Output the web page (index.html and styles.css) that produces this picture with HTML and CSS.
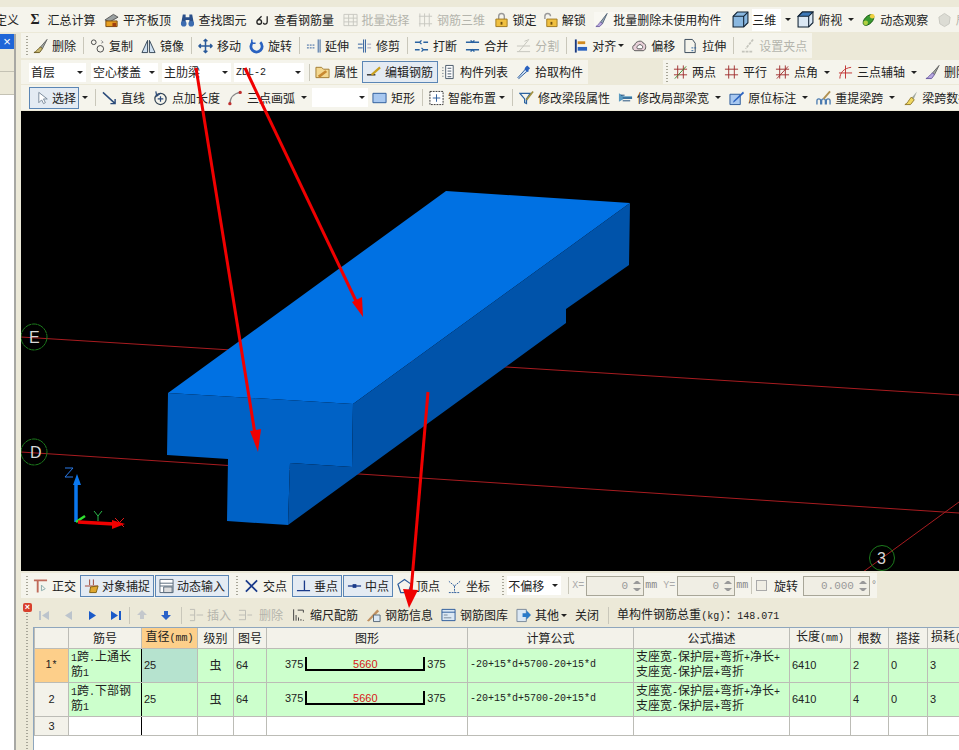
FILE: index.html
```html
<!DOCTYPE html>
<html lang="zh">
<head>
<meta charset="utf-8">
<title>钢筋编辑</title>
<link rel="stylesheet" href="styles.css">
</head>
<body>
<div class="app">
  <div class="tb r1">
    <span class="it first"><span>定义</span></span>
    <span class="it"><span class="sigma">Σ</span><span>汇总计算</span></span>
    <span class="it"><svg class="ic" viewBox="0 0 16 16"><path d="M1 8l9-6 5 3-9 5z" fill="#9aa0a0" stroke="#555"/><path d="M2 9h12v6H2z" fill="#e8a020" stroke="#7a4a10"/><path d="M9 11h4v4H9z" fill="#a04010"/></svg><span>平齐板顶</span></span>
    <span class="it"><svg class="ic" viewBox="0 0 16 16"><path d="M3 2h3v3h4V2h3l2 11h-5V8H6v5H1z" fill="#2a4f8a"/><circle cx="4" cy="12" r="3" fill="#3d6cb0"/><circle cx="12" cy="12" r="3" fill="#3d6cb0"/></svg><span>查找图元</span></span>
    <span class="it"><svg class="ic" viewBox="0 0 16 16" fill="none" stroke="#222" stroke-width="1.4"><circle cx="4.500" cy="10" r="2.500"/><path d="M3 8l4-4"/><path d="M13 4v6c0 3-4 3-4 1"/></svg><span>查看钢筋量</span></span>
    <span class="it off"><svg class="ic" viewBox="0 0 16 16" fill="none" stroke="#c8c8c0"><path d="M1 2h14v12H1zM1 6h14M1 10h14M6 2v12M11 2v12"/></svg><span>批量选择</span></span>
    <span class="it off"><svg class="ic" viewBox="0 0 16 16" fill="none" stroke="#c8c8c0"><path d="M2 1v14M7 1v14M12 1v14M1 4h14M1 12h14"/></svg><span>钢筋三维</span></span>
    <span class="it"><svg class="ic" viewBox="0 0 16 16"><path d="M5 8V4a3 3 0 016 0v4" fill="none" stroke="#999" stroke-width="1.500"/><path d="M2 7h12v8H2z" fill="#f0c040" stroke="#a07a20"/><path d="M7 10h2v3H7z" fill="#705010"/></svg><span>锁定</span></span>
    <span class="it m6"><svg class="ic" viewBox="0 0 16 16"><path d="M2 7V4a3 3 0 016 0" fill="none" stroke="#999" stroke-width="1.500"/><path d="M4 7h11v8H4z" fill="#f0c040" stroke="#a07a20"/><path d="M8 10h2v3H8z" fill="#705010"/></svg><span>解锁</span></span>
    <span class="it wide"><svg class="ic" viewBox="0 0 16 16"><path d="M14 1L7 10l2 2z" fill="#9ab" stroke="#567"/><path d="M7 10l2 2-3 3H2c2-1 3-3 5-5z" fill="#b8a8e0" stroke="#7060a0"/></svg><span>批量删除未使用构件</span></span>
    <span class="it m11"><svg class="ic big" viewBox="0 0 16 16"><path d="M1 5l4-4h10v10l-4 4H1z" fill="#8ab8e0" stroke="#123"/><path d="M1 5h10v10M11 5l4-4" fill="none" stroke="#123"/></svg><span class="whitebg">三维</span><span class="dd"></span></span>
    <span class="it m6"><svg class="ic big" viewBox="0 0 16 16"><path d="M1 5l4-4h10v10l-4 4H1z" fill="#dbe8f4" stroke="#123"/><path d="M1 5l4-4h10l-4 4z" fill="#3c78b8" stroke="#123"/><path d="M11 5v10" stroke="#123"/></svg><span>俯视</span><span class="dd"></span></span>
    <span class="it m7"><svg class="ic" viewBox="0 0 16 16"><ellipse cx="8" cy="8" rx="7" ry="4" transform="rotate(-45 8 8)" fill="#3a9a30" stroke="#1a5a10"/><circle cx="5" cy="11" r="2.500" fill="#b0d040"/><circle cx="12" cy="4" r="2.500" fill="#f0d040"/></svg><span>动态观察</span></span>
    <span class="it off"><svg class="ic" viewBox="0 0 16 16"><path d="M8 1l6 4-1 7-5 3-5-3-1-7z" fill="#dcdcd4" stroke="#c8c8c0"/></svg><span>局部三维</span></span>
  </div>

  <div class="body">
    <aside class="side">
      <div class="side-inner">
        <div class="side-title">×</div>
        <div class="side-tab"></div>
        <div class="side-tab"></div>
        <div class="side-fill"></div>
      </div>
    </aside>

    <main class="main">
      <div class="tb r2"><div class="seg s2">
        <span class="grip"></span>
        <span class="it m5"><svg class="ic" viewBox="0 0 16 16"><path d="M15 1L8 9l2 2z" fill="#a0a8a0" stroke="#666"/><path d="M8 9l2 2-3 4H1c3-1 4-4 7-6z" fill="#c8b870" stroke="#6a5a20"/></svg><span>删除</span></span>
        <span class="sep"></span>
        <span class="it t"><svg class="ic" viewBox="0 0 16 16" fill="none" stroke="#444"><circle cx="4" cy="4" r="2.500"/><circle cx="11" cy="11" r="3.500"/><path d="M12 2l2 2M12 5l2-1" stroke="#888"/></svg><span>复制</span></span>
        <span class="it"><svg class="ic" viewBox="0 0 16 16" fill="#cfe0f0" stroke="#345"><path d="M7 2v13H1zM9 2v13h6z"/></svg><span>镜像</span></span>
        <span class="sep"></span>
        <span class="it t"><svg class="ic" viewBox="0 0 16 16" fill="none" stroke="#2a5a9a" stroke-width="1.600"><path d="M8 1v14M1 8h14M6 3l2-2 2 2M6 13l2 2 2-2M3 6L1 8l2 2M13 6l2 2-2 2"/></svg><span>移动</span></span>
        <span class="it"><svg class="ic" viewBox="0 0 16 16" fill="none" stroke="#2a62c0" stroke-width="3"><path d="M4 4a6 6 0 108 0"/><path d="M3 1v4h4" stroke-width="1.600"/></svg><span>旋转</span></span>
        <span class="sep"></span>
        <span class="it t"><svg class="ic" viewBox="0 0 16 16" fill="none" stroke="#2a5a9a"><path d="M13 1v14M15 1v14" /><path d="M1 7h2M4 7h2M7 7h3M1 10h9" stroke-dasharray="2 1"/></svg><span>延伸</span></span>
        <span class="it"><svg class="ic" viewBox="0 0 16 16" fill="none" stroke="#2a5a9a"><path d="M7 1v14M9 1v14M1 6h5M1 10h5"/><path d="M11 6h4M11 10h4" stroke="#99b"/></svg><span>修剪</span></span>
        <span class="sep"></span>
        <span class="it t"><svg class="ic" viewBox="0 0 16 16" fill="none" stroke="#2a62a0" stroke-width="1.400"><path d="M1 4h5M10 4h5M1 12h5M10 12h5M8 6l-2-2 2-2M8 10l2 2-2 2"/></svg><span>打断</span></span>
        <span class="it"><svg class="ic" viewBox="0 0 16 16" fill="none" stroke="#2a62a0" stroke-width="1.400"><path d="M1 4h14M1 12h14M6 2l2 2 2-2M6 14l2-2 2 2"/></svg><span>合并</span></span>
        <span class="it off"><svg class="ic" viewBox="0 0 16 16" fill="none" stroke="#c4c4bc"><path d="M1 8h14M1 14h14M3 14l10-12M9 3l5-2"/></svg><span>分割</span></span>
        <span class="sep"></span>
        <span class="it t"><svg class="ic" viewBox="0 0 16 16"><path d="M2 1h2v14H2z" fill="#1a3a80"/><path d="M5 3h8v3H5z" fill="#d08a20"/><path d="M5 9h10v4H5z" fill="#2a62c0"/></svg><span>对齐</span><span class="dd n"></span></span>
        <span class="it"><svg class="ic" viewBox="0 0 16 16" fill="#e8d0d8" stroke="#555"><path d="M3 13c-3-1-3-6 0-6 0-4 8-6 9-2 3 0 4 7 0 8z"/><path d="M6 11c-1-1-1-2 0-3 1-2 4-2 5 0 1 1 0 3-1 3z" fill="#fff"/></svg><span>偏移</span></span>
        <span class="it"><svg class="ic" viewBox="0 0 16 16" fill="none" stroke="#345"><path d="M2 15V1h8l3 4v10z"/><path d="M9 10h5M9 13h3" stroke="#2a62a0" stroke-dasharray="2 1"/></svg><span>拉伸</span></span>
        <span class="sep"></span>
        <span class="it t off"><svg class="ic" viewBox="0 0 16 16" fill="none" stroke="#c4c4bc"><path d="M14 1L6 11M2 14h12" stroke-width="1.800" stroke-dasharray="3 1"/></svg><span>设置夹点</span></span>
      </div></div>

      <div class="tb r3">
        <div class="seg s3a">
          <span class="combo c1"><span>首层</span><i class="dd"></i></span>
          <span class="combo c2"><span>空心楼盖</span><i class="dd"></i></span>
          <span class="combo c3"><span>主肋梁</span><i class="dd"></i></span>
          <span class="combo c4"><span class="lat">ZDL-2</span><i class="dd"></i></span>
          <span class="sep s5m"></span>
          <span class="it m5"><svg class="ic" viewBox="0 0 16 16"><path d="M1 3h6l2 2h6v9H1z" fill="#f4d890" stroke="#a07a30"/><path d="M3 12l8-6 2 2-8 6z" fill="#c88830"/></svg><span>属性</span></span>
          <span class="it btn e"><svg class="ic" viewBox="0 0 16 16" fill="none"><path d="M1 11h9" stroke="#222" stroke-width="1.400"/><path d="M15 3L6 11" stroke="#c8a020" stroke-width="2.400"/></svg><span>编辑钢筋</span></span>
          <span class="it m3"><svg class="ic" viewBox="0 0 16 16" fill="none" stroke="#456"><path d="M5 1h8v14H5z" fill="#fff"/><path d="M7 4h4M7 7h4M7 10h4M7 13h4M2 3v1M2 6v1M2 9v1M2 12v1"/></svg><span>构件列表</span></span>
          <span class="it"><svg class="ic" viewBox="0 0 16 16"><path d="M2 14l8-9 2 2-9 8z" fill="#cfe0f4" stroke="#2a5a9a"/><path d="M10 3l2-2 3 3-2 2 1 1-2 1-3-3 1-2z" fill="#2a62c0"/></svg><span>拾取构件</span></span>
        </div>
        <div class="seg s3b">
          <span class="grip g1"></span>
          <span class="it m5"><svg class="ic" viewBox="0 0 16 16" fill="none" stroke="#a03030"><path d="M1 5h14M1 11h14M5 1v14M11 1v14"/><path d="M2 15L14 2" stroke="#3a8a30"/></svg><span>两点</span></span>
          <span class="it"><svg class="ic" viewBox="0 0 16 16" fill="none" stroke="#a03030"><path d="M1 5h14M1 11h14M5 1v14M11 1v14"/></svg><span>平行</span></span>
          <span class="it"><svg class="ic" viewBox="0 0 16 16" fill="none" stroke="#a03030"><path d="M1 5h14M1 11h14M5 1v14M11 1v14M2 15L14 2"/></svg><span>点角</span><span class="dd"></span></span>
          <span class="it"><svg class="ic" viewBox="0 0 16 16" fill="none" stroke="#c03030"><path d="M2 15C2 9 6 4 14 3M1 9h14M8 1v14"/></svg><span>三点辅轴</span><span class="dd"></span></span>
          <span class="it"><svg class="ic" viewBox="0 0 16 16"><path d="M15 1L8 9l2 2z" fill="#a0a8a0" stroke="#666"/><path d="M8 9l2 2-3 4H1c3-1 4-4 7-6z" fill="#b8a8e0" stroke="#6a5aa0"/></svg><span>删除</span></span>
        </div>
      </div>

      <div class="tb r4"><div class="seg s4">
        <span class="it btn sel"><svg class="ic" viewBox="0 0 16 16"><path d="M3 2v11l3-3 2 4 2-1-2-4h4z" fill="#fff" stroke="#789"/></svg><span>选择</span></span>
        <span class="dd n3"></span>
        <span class="sep"></span>
        <span class="it t"><svg class="ic" viewBox="0 0 16 16" fill="none" stroke="#2a4a7a" stroke-width="1.500"><path d="M1 2l13 12M14 9v5H9"/></svg><span>直线</span></span>
        <span class="it"><svg class="ic" viewBox="0 0 16 16" fill="none" stroke="#345" stroke-width="1.300"><circle cx="8" cy="9" r="6"/><path d="M8 6v6M5 9h6M3 1l1 5 4-3" stroke="#2a4a7a"/></svg><span>点加长度</span></span>
        <span class="it"><svg class="ic" viewBox="0 0 16 16" fill="none" stroke="#888" stroke-width="1.600"><path d="M2 15C2 8 6 3 13 2"/><circle cx="2" cy="14" r="1" fill="#c03030" stroke="#c03030"/><circle cx="13" cy="2" r="1" fill="#c03030" stroke="#c03030"/></svg><span>三点画弧</span><span class="dd"></span></span>
        <span class="combo c5"><span></span><i class="dd"></i></span>
        <span class="it m4"><svg class="ic" viewBox="0 0 16 16"><path d="M1 3h14v10H1z" fill="#a8c8f0" stroke="#2a5a9a"/></svg><span>矩形</span></span>
        <span class="sep"></span>
        <span class="it t"><svg class="ic" viewBox="0 0 16 16" fill="#fff" stroke="#333" stroke-dasharray="2 1"><path d="M1 1h14v14H1z"/><path d="M8 4v8M4 8h8" stroke="#2a5a9a" stroke-dasharray="none"/></svg><span>智能布置</span><span class="dd n3"></span></span>
        <span class="sep"></span>
        <span class="it t"><svg class="ic" viewBox="0 0 16 16" fill="none" stroke="#2a62a0" stroke-width="1.300"><path d="M1 3h11L8 9v5l-2-1V9z"/><path d="M15 1L8 10" stroke="#a09040" stroke-width="1.800"/></svg><span>修改梁段属性</span></span>
        <span class="it"><svg class="ic" viewBox="0 0 16 16"><path d="M1 3l5 3 9 0v3l-9 0-5 3z" fill="#5a9ac0"/><path d="M5 8h10M5 11h8M3 5h4" stroke="#1a4a7a" fill="none"/></svg><span>修改局部梁宽</span><span class="dd"></span></span>
        <span class="it"><svg class="ic" viewBox="0 0 16 16"><path d="M1 4h11v11H1z" fill="#a8c8f0" stroke="#2a5a9a"/><path d="M15 1L5 11l-1 2 2-1L16 3z" fill="#2a62c0"/></svg><span>原位标注</span><span class="dd"></span></span>
        <span class="it"><svg class="ic" viewBox="0 0 16 16" fill="none" stroke="#4a7ab0" stroke-width="1.400"><path d="M1 15v-4a2 2 0 014 0v4M6 15v-4a2 2 0 014 0v4M11 15v-4a2 2 0 014 0v4"/><path d="M15 1L8 9" stroke="#b09050" stroke-width="2"/></svg><span>重提梁跨</span><span class="dd"></span></span>
        <span class="it"><svg class="ic" viewBox="0 0 16 16"><path d="M15 1L9 8l2 2z" fill="#a0a8a0"/><path d="M9 7l3 3-4 5H2c3-1 4-5 7-8z" fill="#f0d860" stroke="#90782a"/></svg><span>梁跨数据复制</span></span>
      </div></div>

      <div class="canvas">
        <svg class="scene" viewBox="21 111 938 460" aria-label="三维视图">
          <g fill="none" stroke="#a81c20" stroke-width="1">
            <path d="M21 337L959 395"/>
            <path d="M21 452L959 513"/>
            <path d="M863 572L959 502"/>
          </g>
          <g fill="none" stroke="#1c7a1c">
            <circle cx="34" cy="337" r="13" stroke-dasharray="6 .5"/>
            <circle cx="34" cy="452" r="13" stroke-dasharray="6 .5"/>
            <circle cx="882" cy="558" r="12.500"/>
          </g>
          <g class="axis-name">
            <text x="29" y="343">E</text>
            <text x="30" y="458">D</text>
            <text x="877" y="564">3</text>
          </g>
          <path fill="#0071e3" d="M446 191L630 203L353 404L168 393z"/>
          <path fill="#0062c6" d="M168 393L353 404L352 467L290 463L288 525L227 521L228 459L167 455z"/>
          <path fill="#0053aa" d="M353 404L630 203L629 265L566 309L566 323L288 525L290 463L352 467z"/>
          <g fill="none" stroke-width="1">
            <path d="M65 468h8l-8 9h8" stroke="#2a7ae8"/>
            <path d="M94 511l4 5 4-5M98 516v5" stroke="#2ab84a"/>
            <path d="M115 518l9 9M124 518l-9 9" stroke="#e01818"/>
          </g>
          <path d="M76 522V482" stroke="#0a78f0" stroke-width="3.500"/>
          <path d="M77 474l4 11h-8z" fill="#0a78f0"/>
          <path d="M76 522l9-6" stroke="#30e030" stroke-width="2.500"/>
          <path d="M78 522l36 2" stroke="#f00000" stroke-width="3.500"/>
          <path d="M125 524l-13 5v-9z" fill="#f00000"/>
        </svg>
      </div>

      <div class="tb r5"><div class="seg s5">
        <span class="grip"></span>
        <span class="it m5"><svg class="ic" viewBox="0 0 16 16" fill="none" stroke="#c06a5a" stroke-width="2"><path d="M1 2h14M5 2v13"/><path d="M9 7v6l4-2z" stroke="#8aa" stroke-width="1"/></svg><span>正交</span></span>
        <span class="it btn on one"><svg class="ic" viewBox="0 0 16 16"><path d="M1 8h14M6 1v6M10 1v6" stroke="#a04030" fill="none"/><path d="M7 9l8-1-2 7H6z" fill="#e0a830" stroke="#806010"/></svg><span>对象捕捉</span></span>
        <span class="it btn on two"><svg class="ic" viewBox="0 0 16 16" fill="#fff" stroke="#567"><path d="M1 1h14v14H1z"/><path d="M1 5h14M1 8h14" /><path d="M5 9h9v6H5z" fill="#ddd"/></svg><span>动态输入</span></span>
        <span class="grip g2"></span>
        <span class="it t"><svg class="ic" viewBox="0 0 16 16" fill="none" stroke="#1a3a8a" stroke-width="1.800"><path d="M2 2l12 12M14 2L2 14"/></svg><span>交点</span></span>
        <span class="it btn on three"><svg class="ic" viewBox="0 0 16 16" fill="none" stroke="#1a3a8a" stroke-width="1.400"><path d="M1 13h14M9 2v11"/></svg><span>垂点</span></span>
        <span class="it btn on four"><svg class="ic" viewBox="0 0 16 16"><path d="M1 8h14" stroke="#1a3a8a" stroke-width="1.400"/><path d="M6 6h4v4H6z" fill="#1a3a8a"/></svg><span>中点</span></span>
        <span class="it m4"><svg class="ic" viewBox="0 0 16 16" fill="none" stroke="#2a5a9a" stroke-width="1.300"><path d="M8 1l7 5-3 9H4L1 6z"/></svg><span>顶点</span></span>
        <span class="it m7"><svg class="ic" viewBox="0 0 16 16" fill="none" stroke="#2a5a9a"><path d="M8 8v7M8 8L2 3M8 8l6-5M2 15h12" stroke-dasharray="2 1"/></svg><span>坐标</span></span>
        <span class="grip g3"></span>
        <span class="combo c6"><span>不偏移</span><i class="dd"></i></span>
        <span class="sep"></span>
        <span class="lbl">X=</span>
        <span class="spin sx"><span class="num">0</span><i class="sp"></i></span>
        <span class="lbl mm">mm</span>
        <span class="lbl y">Y=</span>
        <span class="spin sy"><span class="num">0</span><i class="sp"></i></span>
        <span class="lbl mm">mm</span>
        <span class="sep s8"></span>
        <span class="check"></span>
        <span class="rot">旋转</span>
        <span class="spin sr"><span class="num">0.000</span><i class="sp"></i></span>
        <span class="lbl mm">°</span>
      </div></div>

      <section class="panel">
        <span class="close">×</span>
        <div class="tb r6">
          <svg class="nav n1" viewBox="0 0 12 12" fill="#bcc4cc"><path d="M1 2h2v9H1zM11 2v9L4 6.500z"/></svg>
          <svg class="nav n2" viewBox="0 0 12 12" fill="#bcc4cc"><path d="M9 2v9L2 6.500z"/></svg>
          <svg class="nav n3" viewBox="0 0 12 12" fill="#1a5ac8"><path d="M3 2v9l7-4.500z"/></svg>
          <svg class="nav n4" viewBox="0 0 12 12" fill="#1a5ac8"><path d="M1 2v9l7-4.500zM9 2h2v9H9z"/></svg>
          <span class="sep s6"></span>
          <svg class="nav n5" viewBox="0 0 12 12" fill="#c4c8cc"><path d="M6 1l5 5H8v4H4V6H1z"/></svg>
          <svg class="nav n6" viewBox="0 0 12 12" fill="#2a62c8"><path d="M6 11l5-5H8V2H4v4H1z"/></svg>
          <span class="sep s7"></span>
          <span class="it off p"><svg class="ic" viewBox="0 0 16 16" fill="none" stroke="#bcbcb4"><path d="M1 2h5v12H1M1 8h5M8 8h7"/></svg><span>插入</span></span>
          <span class="it off p2"><svg class="ic" viewBox="0 0 16 16" fill="none" stroke="#bcbcb4"><path d="M1 3h7v10H1M1 8h7M10 8h5"/></svg><span>删除</span></span>
          <span class="it p3"><svg class="ic small" viewBox="0 0 16 16" fill="none" stroke="#444" stroke-width="1.200"><path d="M2 1v14M5 15v-7M8 15v-4M11 15v-2M14 15v-1M7 2h7v3" /></svg><span>缩尺配筋</span></span>
          <span class="it"><svg class="ic" viewBox="0 0 16 16"><path d="M1 14L12 2l2 2L3 15z" fill="#c09060"/><path d="M8 8h7v7H8z" fill="#dbe8f4" stroke="#567"/></svg><span>钢筋信息</span></span>
          <span class="it"><svg class="ic" viewBox="0 0 16 16" fill="#dbe8f4" stroke="#2a5a9a"><path d="M1 2h14v12H1z"/><path d="M1 5h14" /><path d="M3 8h4M3 11h8" stroke="#789"/></svg><span>钢筋图库</span></span>
          <span class="it"><svg class="ic" viewBox="0 0 16 16"><path d="M1 2h10v13H1z" fill="#dbe8f4" stroke="#789"/><path d="M7 6h4V3l5 5-5 5v-3H7z" fill="#2a7ac8"/></svg><span>其他</span><span class="dd n"></span></span>
          <span class="it"><span>关闭</span></span>
          <span class="sep s9"></span>
          <span class="total">单构件钢筋总重<span class="n10">(kg)</span>：<span class="n10">148.071</span></span>
        </div>
        <div class="grid-wrap">
          <table class="grid">
            <colgroup>
              <col class="w0"><col class="w1"><col class="w2"><col class="w3"><col class="w4"><col class="w5"><col class="w6"><col class="w7"><col class="w8"><col class="w9"><col class="w10"><col class="w11">
            </colgroup>
            <thead>
              <tr>
                <th></th><th>筋号</th><th class="hot">直径<span class="n10">(mm)</span></th><th>级别</th><th>图号</th><th>图形</th><th>计算公式</th><th>公式描述</th><th>长度<span class="n10">(mm)</span></th><th>根数</th><th>搭接</th><th class="lh">损耗<span class="n10">(%)</span></th>
              </tr>
            </thead>
            <tbody>
              <tr>
                <td class="no hot">1<span class="n10">*</span></td>
                <td class="tx fz"><span class="n10">1</span>跨<span class="n10">.</span>上通长<br>筋<span class="n10">1</span></td>
                <td class="v cur">25</td><td class="ctr">虫</td><td class="v">64</td>
                <td class="shape-cell"><div class="shape"><span class="v">375</span><span class="bar">5660</span><span class="v">375</span></div></td>
                <td class="f">-20+15*d+5700-20+15*d</td>
                <td class="tx d">支座宽<span class="n10">-</span>保护层<span class="n10">+</span>弯折<span class="n10">+</span>净长<span class="n10">+</span><br>支座宽<span class="n10">-</span>保护层<span class="n10">+</span>弯折</td>
                <td class="v">6410</td><td class="v">2</td><td class="v">0</td><td class="v">3</td>
              </tr>
              <tr>
                <td class="no">2</td>
                <td class="tx fz"><span class="n10">1</span>跨<span class="n10">.</span>下部钢<br>筋<span class="n10">1</span></td>
                <td class="v">25</td><td class="ctr">虫</td><td class="v">64</td>
                <td class="shape-cell"><div class="shape"><span class="v">375</span><span class="bar">5660</span><span class="v">375</span></div></td>
                <td class="f">-20+15*d+5700-20+15*d</td>
                <td class="tx d">支座宽<span class="n10">-</span>保护层<span class="n10">+</span>弯折<span class="n10">+</span>净长<span class="n10">+</span><br>支座宽<span class="n10">-</span>保护层<span class="n10">+</span>弯折</td>
                <td class="v">6410</td><td class="v">4</td><td class="v">0</td><td class="v">3</td>
              </tr>
              <tr class="empty">
                <td class="no">3</td><td class="fz"></td><td></td><td></td><td></td><td></td><td></td><td></td><td></td><td></td><td></td><td></td>
              </tr>
            </tbody>
          </table>
        </div>
      </section>
    </main>
  </div>

  <svg class="marks" viewBox="0 0 959 750" aria-hidden="true">
    <g stroke="#f00000" stroke-width="3" fill="none">
      <path d="M196 68L255 434"/>
      <path d="M245 68L356 301"/>
      <path d="M428 392L411 592"/>
    </g>
    <g fill="#f00000">
      <path d="M258 452L250 431L261 429z"/>
      <path d="M363 317L352 302L362 297z"/>
      <path d="M409 608L403 589L418 590z"/>
    </g>
  </svg>
</div>
</body>
</html>
```

FILE: styles.css
```css
* { box-sizing: border-box; }
html, body { margin: 0; padding: 0; }
body { font-family: "Noto Sans CJK SC", "Liberation Sans", sans-serif; font-size: 12px; color: #222; }

.app {
  position: relative;
  width: 959px;
  height: 750px;
  overflow: hidden;
  background: #ece9d8;
  padding-top: 7px;
  display: flex;
  flex-direction: column;
}

.tb { display: flex; align-items: center; height: 25px; flex-shrink: 0; line-height: 1; white-space: nowrap; }
.seg { display: flex; align-items: center; height: 100%; background: #f5f4ec; }
.it { display: inline-flex; align-items: center; gap: 4px; margin-left: 8px; flex-shrink: 0; }
.it.t { margin-left: 6px; }
.it.m3 { margin-left: 3px; }
.it.m4 { margin-left: 4px; }
.it.m5 { margin-left: 5px; }
.it.m6 { margin-left: 6px; }
.it.m7 { margin-left: 7px; }
.it.m11 { margin-left: 11px; }
.it.off { color: #b4b4ac; }
.ic { width: 15px; height: 16px; flex-shrink: 0; }
.ic.big { width: 17px; height: 17px; }
.sep { width: 1px; height: 17px; background: #c9c7ba; margin-left: 7px; flex-shrink: 0; }
.sep.s5m { margin-left: 5px; }
.sep.s8 { margin-left: 3px; }
.sep.s9 { margin-left: 9px; }
.grip { width: 2px; height: 19px; margin-left: 5px; background-image: linear-gradient(#a8a698 50%, transparent 50%); background-size: 2px 3px; flex-shrink: 0; }
.grip.g1 { margin-left: 3px; }
.dd { width: 0; height: 0; border: 3px solid transparent; border-top: 3px solid #222; border-bottom: 0; margin-left: 2px; flex-shrink: 0; display: inline-block; }
.it .dd { margin-left: 2px; }
.it .dd.n { margin-left: -2px; }
.it .dd.n3 { margin-left: -1px; }
.dd.n3 { margin-left: 3px; }

.r1 { background: #f5f4ec; }
.r1 .it { margin-left: 8.5px; }
.r1 .it.first { margin-left: -5px; }
.r1 .it.m6 { margin-left: 6px; }
.r1 .it.m7 { margin-left: 7px; }
.r1 .it.m11 { margin-left: 11px; }
.sigma { font: bold 14px "Liberation Serif", serif; width: 9px; text-align: center; margin-left: 3px; margin-right: 4px; }
.it.wide { background: #f9f8f2; }
.whitebg { background: #fff; padding: 5px 5px 5px 0; margin-left: -1px; margin-right: -2px; }

.body { flex: 1; display: flex; min-height: 0; }
.side { width: 21px; flex-shrink: 0; padding-top: 2px; }
.side-inner { width: 16px; height: 100%; border-right: 2px solid #a8a8a4; background: #fff; display: flex; flex-direction: column; }
.side-title { height: 15px; background: #1f66d8; color: #fff; text-align: center; font: 13px/15px "Liberation Sans", sans-serif; }
.side-tab { height: 23px; background: #ece9d8; border-bottom: 1px solid #c4c2b4; }
.side-fill { flex: 1; }

.main { flex: 1; min-width: 0; display: flex; flex-direction: column; padding-top: 1px; }
.s2 { width: 791px; }
.r3 { margin-top: 2px; justify-content: space-between; height: 24px; }
.s3a { width: 567px; }
.s3b { width: 296px; }
.r4 { margin-top: 1px; }
.s4 { width: 100%; }

.combo { display: flex; align-items: center; justify-content: space-between; height: 19px; background: #fff; padding-left: 2px; margin-left: 4px; flex-shrink: 0; }
.combo > i.dd { margin-left: 0; margin-right: 3px; }
.c1 { width: 57px; margin-left: 8px; }
.c2 { width: 67px; margin-left: 5px; }
.c3 { width: 69px; }
.c4 { width: 70px; margin-left: 3px; }
.c5 { width: 56px; margin-left: 5px; }
.c6 { width: 54px; margin-left: 3px; padding-left: 1px; }
.lat { font: 10px "Liberation Mono", monospace; }

.btn { height: 22px; border: 1px solid #5b86b5; background: #e4ebf3; padding: 0 4px 0 3px; }
.btn.e { margin-left: 4px; }
.btn.sel { margin-left: 8px; padding: 0 2px 0 6px; gap: 1px; }
.btn.on { margin-left: 4px; gap: 3px; padding: 0 3px 0 3px; }
.btn.on.two { margin-left: 1px; }
.btn.on.three { margin-left: 5px; }
.btn.on.four { margin-left: 1px; }

.canvas { height: 460px; margin-top: 1px; background: #000; flex-shrink: 0; }
.scene { display: block; width: 938px; height: 460px; }
.axis-name { fill: #d8d8d8; font: 16px "Liberation Sans", sans-serif; }

.r5 { margin-top: 2px; }
.s5 { width: 856px; }
.g2 { margin-left: 7px; }
.g3 { margin-left: 12px; }
.lbl { font: 10px "Liberation Mono", monospace; color: #aaa; margin-left: 3px; }
.lbl.mm { margin-left: 1px; color: #888; }
.lbl.y { margin-left: 6px; }
.spin { display: flex; align-items: center; justify-content: flex-end; height: 20px; background: #f0eee4; border: 1px solid #a8a698; margin-left: 2px; font: 11px "Liberation Mono", monospace; color: #999; flex-shrink: 0; }
.sx, .sy { width: 58px; }
.sr { width: 67px; margin-left: 5px; }
.num { margin-right: 5px; }
.sp { display: flex; flex-direction: column; justify-content: center; gap: 4px; width: 8px; margin-right: 2px; }
.sp::before, .sp::after { content: ""; border: 3px solid transparent; }
.sp::before { border-top: 0; border-bottom: 3px solid #999; }
.sp::after { border-bottom: 0; border-top: 3px solid #999; }
.check { width: 11px; height: 11px; border: 1px solid #aaa; background: #f0eee4; margin-left: 4px; }
.rot { margin-left: 7px; }

.panel { position: relative; flex: 1; min-height: 0; margin-top: 5px; display: flex; flex-direction: column; }
.panel::before { content: ""; position: absolute; left: 5px; top: 7px; bottom: 0; width: 2px; background-image: linear-gradient(#a8a698 50%, transparent 50%); background-size: 2px 3px; }
.close { position: absolute; left: 2px; top: 0; width: 9px; height: 9px; border-radius: 2px; background: #d8402c; color: #fff; font: bold 9px/9px "Liberation Sans", sans-serif; text-align: center; }
.r6 { height: 24px; }
.nav { width: 12px; height: 12px; flex-shrink: 0; }
.n1 { margin-left: 17px; }
.n2 { margin-left: 13px; }
.n3 { margin-left: 11px; }
.n4 { margin-left: 12px; }
.n5 { margin-left: 6px; }
.n6 { margin-left: 12px; }
.sep.s6 { margin-left: 7px; }
.sep.s7 { margin-left: 9px; }
.it.p { margin-left: 7px; gap: 3px; }
.it.p2 { margin-left: 7px; gap: 6px; }
.it.p3 { margin-left: 9px; gap: 5px; }
.ic.small { width: 13px; }
.total { margin-left: 8px; }
.n10 { font-family: "Liberation Mono", monospace; font-size: 10px; }

.grid-wrap { flex: 1; min-height: 0; margin-left: 12px; background: #fff; border-left: 1px solid #8ea6bd; border-top: 1px solid #8ea6bd; overflow: hidden; }
.grid { table-layout: fixed; border-collapse: collapse; width: 953px; }
.w0 { width: 34px; } .w1 { width: 73px; } .w2 { width: 56px; } .w3 { width: 36px; } .w4 { width: 33px; }
.w5 { width: 201px; } .w6 { width: 166px; } .w7 { width: 156px; } .w8 { width: 61px; } .w9 { width: 38px; } .w10 { width: 39px; } .w11 { width: 60px; }
.grid th, .grid td { border: 1px solid #bcbcb6; border-top: 0; padding: 0; font-weight: 400; line-height: 12px; overflow: hidden; white-space: nowrap; }
.grid th { height: 20px; background: #f3f2ea; text-align: center; }
.grid th.lh { text-align: left; padding-left: 3px; }
.grid th.hot, .grid td.hot { background: #fdcf8a; }
.grid tbody tr { height: 34px; background: #ccffcc; }
.grid tbody tr.empty { height: 19px; background: #fff; }
.grid td.no { background: #f3f2ea; text-align: center; font: 11px/12px "Liberation Sans", sans-serif; }
.grid td.no.hot { background: #fdcf8a; }
.grid .fz { border-right: 1px solid #000; }
.grid td.tx { padding-left: 2px; }
.grid td.v { padding-left: 2px; font: 11px/12px "Liberation Sans", sans-serif; }
.grid td.f { padding-left: 2px; font: 10px/12px "Liberation Mono", monospace; }
.grid td.cur { background: #b6e3cf; }
.grid td.ctr { text-align: center; }
.grid td.shape-cell { vertical-align: top; }
.shape { display: flex; align-items: flex-start; padding-left: 18px; margin-top: 8px; height: 14px; }
.shape .v { font: 11px/14px "Liberation Sans", sans-serif; }
.bar { width: 120px; height: 14px; margin: 0 2px; border: 2px solid #000; border-top: 0; color: #d81818; text-align: center; font: 11px/14px "Liberation Sans", sans-serif; }

.marks { position: absolute; left: 0; top: 0; width: 959px; height: 750px; pointer-events: none; }
```
